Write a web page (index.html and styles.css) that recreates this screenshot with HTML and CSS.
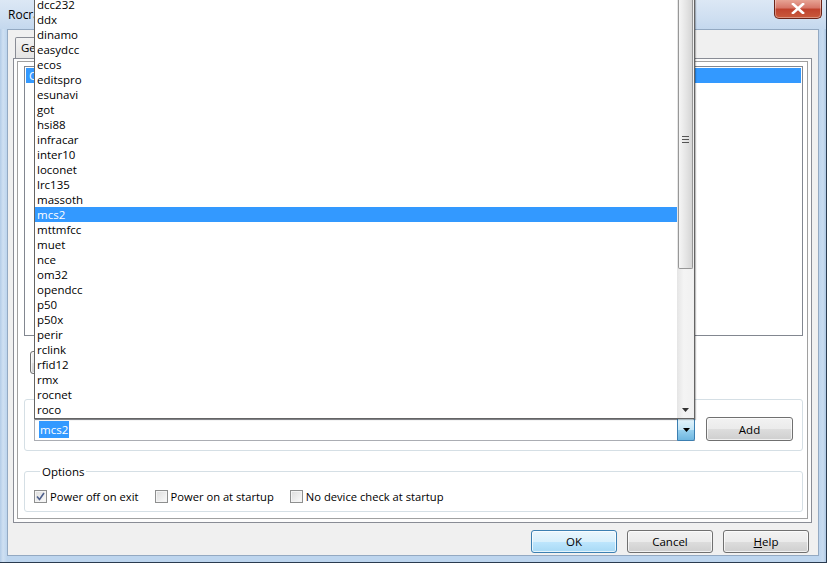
FILE: index.html
```html
<!DOCTYPE html>
<html>
<head>
<meta charset="utf-8">
<title>Rocrail Properties</title>
<link rel="stylesheet" href="styles.css">
</head>
<body>
<div class="window">
  <div class="titlebar">
    <span class="title">Rocrail Properties</span>
    <div class="close">
      <svg width="14" height="11" viewBox="0 0 14 11"><path d="M2 1 L12 10 M12 1 L2 10" stroke="#fff" stroke-width="2.6" stroke-linecap="square"/></svg>
    </div>
  </div>
  <div class="mid">
    <div class="client">
      <div class="tabs"><div class="tab">General</div></div>
      <div class="panel">
        <div class="page">
          <div class="listbox">
            <div class="lrow sel">CS-1</div>
          </div>
          <div class="listbtns">
            <button class="btn">Delete</button>
          </div>
          <div class="group combo-group">
            <div class="combo">
              <div class="edit"><span class="seltext">mcs2</span></div>
              <div class="drop"><svg width="7" height="4" viewBox="0 0 7 4"><path d="M0 0 H7 L3.5 4 Z" fill="#000"/></svg></div>
            </div>
            <button class="btn add">Add</button>
          </div>
          <fieldset class="options">
            <legend>Options</legend>
            <div class="checks">
              <label class="check"><span class="box checked"><svg width="9" height="9" viewBox="0 0 9 9"><path d="M1 4.5 L3.5 7.5 L8 1" fill="none" stroke="#4d5f8c" stroke-width="1.6"/></svg></span>Power off on exit</label>
              <label class="check"><span class="box"></span>Power on at startup</label>
              <label class="check"><span class="box"></span>No device check at startup</label>
            </div>
          </fieldset>
        </div>
      </div>
      <div class="footer">
        <button class="btn default">OK</button>
        <button class="btn">Cancel</button>
        <button class="btn"><u>H</u>elp</button>
      </div>
    </div>
  </div>

  <div class="dropdown">
    <div class="items">
      <div class="item">dcc232</div>
      <div class="item">ddx</div>
      <div class="item">dinamo</div>
      <div class="item">easydcc</div>
      <div class="item">ecos</div>
      <div class="item">editspro</div>
      <div class="item">esunavi</div>
      <div class="item">got</div>
      <div class="item">hsi88</div>
      <div class="item">infracar</div>
      <div class="item">inter10</div>
      <div class="item">loconet</div>
      <div class="item">lrc135</div>
      <div class="item">massoth</div>
      <div class="item sel">mcs2</div>
      <div class="item">mttmfcc</div>
      <div class="item">muet</div>
      <div class="item">nce</div>
      <div class="item">om32</div>
      <div class="item">opendcc</div>
      <div class="item">p50</div>
      <div class="item">p50x</div>
      <div class="item">perir</div>
      <div class="item">rclink</div>
      <div class="item">rfid12</div>
      <div class="item">rmx</div>
      <div class="item">rocnet</div>
      <div class="item">roco</div>
    </div>
    <div class="vscroll">
      <div class="thumb">
        <svg width="7" height="7" viewBox="0 0 7 7"><path d="M0 0.5 H7 M0 3.5 H7 M0 6.5 H7" stroke="#555" stroke-width="1"/></svg>
      </div>
      <div class="track"></div>
      <div class="sdown"><svg width="7" height="4" viewBox="0 0 7 4"><path d="M0 0 H7 L3.5 4 Z" fill="#333"/></svg></div>
    </div>
  </div>
</div>
</body>
</html>
```
FILE: styles.css
```css
* { box-sizing: border-box; }
html, body { margin: 0; padding: 0; }
body {
  width: 827px;
  height: 563px;
  overflow: hidden;
  font-family: "Open Sans", "Liberation Sans", sans-serif;
  font-size: 11.5px;
  color: #000;
  background: #bcd4ec;
}

.window {
  position: relative;
  width: 827px;
  height: 563px;
  display: flex;
  flex-direction: column;
  background: linear-gradient(to right, #b3cce7 0, #cfe0f2 3px, #bdd5ee 7px, #bdd5ee 819px, #c9dcf0 823px, #aec8e4 826px);
  border-right: 1px solid #2a3b4f;
  border-bottom: 1px solid #2a3b4f;
  overflow: hidden;
}

.titlebar {
  height: 29px;
  display: flex;
  align-items: center;
  padding-left: 8px;
  background: linear-gradient(to bottom, #dce8f5, #cfdff1 60%, #c4d8ee);
}
.title { font-size: 12px; color: #000; }
.close {
  align-self: flex-start;
  margin-left: auto;
  margin-right: 4px;
  margin-top: -1px;
  width: 48px;
  height: 20px;
  border: 1px solid #6b2418;
  border-top: none;
  border-radius: 0 0 5px 5px;
  background: linear-gradient(to bottom, #e9a99a 0, #d7786a 45%, #c0432e 55%, #c95a3c 100%);
  display: flex;
  align-items: center;
  justify-content: center;
  box-shadow: inset 0 0 0 1px rgba(255,255,255,0.35);
}

.mid {
  flex: 1;
  display: flex;
  padding: 0 7px 6px 7px;
}
.client {
  flex: 1;
  display: flex;
  flex-direction: column;
  background: #f0f0f0;
  border: 1px solid #93a9c2;
}

.tabs {
  display: flex;
  padding: 7px 0 0 7px;
  height: 28px;
}
.tab {
  height: 21px;
  padding: 2px 6px 0 5px;
  border: 1px solid #898c95;
  border-bottom: none;
  border-radius: 2px 2px 0 0;
  background: linear-gradient(to bottom, #f2f2f2, #e4e4e4);
  font-size: 11.5px;
  line-height: 16px;
}

.panel {
  margin-left: 5px;
  width: 799px;
  height: 465px;
  border: 1px solid #898c95;
  background: #fcfcfc;
  padding: 2px 3px 3px 3px;
}
.page {
  height: 100%;
  border: 1px solid #a0a0a0;
  background: #fff;
  display: flex;
  flex-direction: column;
  padding: 4px 4px 0 6px;
}

.listbox {
  height: 270px;
  border: 1px solid #828790;
  padding: 1px;
  background: #fff;
}
.lrow {
  height: 15px;
  line-height: 15px;
  padding-left: 3px;
}
.lrow.sel { background: #3399ff; color: #fff; }

.listbtns {
  display: flex;
  margin-top: 15px;
  padding-left: 6px;
}

.btn {
  font-family: inherit;
  font-size: 11.5px;
  color: #000;
  width: 86px;
  height: 23px;
  padding: 0;
  border: 1px solid #707070;
  border-radius: 3px;
  background: linear-gradient(to bottom, #f2f2f2 0, #ebebeb 50%, #dddddd 51%, #cfcfcf 100%);
  box-shadow: inset 0 0 0 1px rgba(255,255,255,0.7);
}
.btn.default {
  border-color: #3c7fb1;
  background: linear-gradient(to bottom, #eaf6fd 0, #d9f0fc 50%, #bee6fd 51%, #a7d9f5 100%);
}

.group {
  border: 1px solid #d5dfe5;
  border-radius: 3px;
}
.combo-group {
  margin-top: 25px;
  height: 52px;
  display: flex;
  align-items: flex-start;
  padding: 17px 0 0 9px;
}
.combo {
  margin-top: 2px;
  width: 661px;
  height: 22px;
  display: flex;
  border: 1px solid #abadb3;
  border-right: none;
  background: #fff;
}
.edit {
  flex: 1;
  padding: 1px 0 0 4px;
}
.seltext {
  display: inline-block;
  height: 17px;
  line-height: 17px;
  padding: 0 1px;
  background: #3399ff;
  color: #fff;
}
.drop {
  width: 18px;
  margin-top: -2px;
  height: 23px;
  border: 1px solid #3c7fb1;
  border-radius: 0 2px 2px 0;
  background: linear-gradient(to bottom, #e3f4fc 0, #c4e5f6 50%, #98d1ef 51%, #6fb7e0 100%);
  display: flex;
  align-items: center;
  justify-content: center;
}
.add {
  margin-left: 11px;
  width: 87px;
  height: 24px;
}

.options {
  display: block;
  margin: 13px 0 0 0;
  padding: 0 0 7px 9px;
  border: 1px solid #d5dfe5;
  border-radius: 3px;
  min-width: 0;
}
.options legend {
  margin-left: 6px;
  padding: 0 2px;
  font-size: 11.5px;
  line-height: 15px;
}
.checks {
  display: flex;
  align-items: center;
  gap: 16px;
  padding-top: 10px;
}
.check {
  display: flex;
  align-items: center;
  gap: 3px;
  height: 15px;
  font-size: 11.2px;
}
.box {
  width: 13px;
  height: 13px;
  border: 1px solid #8e8f8f;
  background: linear-gradient(135deg, #dcdcdc, #fbfbfb);
  box-shadow: inset 0 0 0 1px #f4f4f4;
  display: flex;
  align-items: center;
  justify-content: center;
}

.footer {
  flex: 1;
  display: flex;
  justify-content: flex-end;
  gap: 10px;
  padding: 7px 9px 0 0;
}

.dropdown {
  position: absolute;
  left: 34px;
  top: -4px;
  width: 661px;
  height: 423px;
  border: 1px solid #646464;
  background: #fff;
  display: flex;
  box-shadow: 1px 1px 1px rgba(0,0,0,0.25);
}
.items {
  flex: 1;
}
.item {
  height: 15px;
  line-height: 15px;
  padding-left: 2px;
}
.item.sel { background: #3399ff; color: #fff; }

.vscroll {
  width: 17px;
  display: flex;
  flex-direction: column;
  background: linear-gradient(to right, #e5e5e5, #f4f4f4 40%, #f0f0f0);
}
.thumb {
  margin: 0 1px;
  height: 272px;
  border: 1px solid #979797;
  border-top: none;
  border-radius: 0 0 2px 2px;
  background: linear-gradient(to right, #f5f5f5, #e6e6e6 50%, #d5d5d5);
  display: flex;
  justify-content: center;
  padding-top: 139px;
}
.track { flex: 1; }
.sdown {
  height: 17px;
  display: flex;
  align-items: center;
  justify-content: center;
}
```
